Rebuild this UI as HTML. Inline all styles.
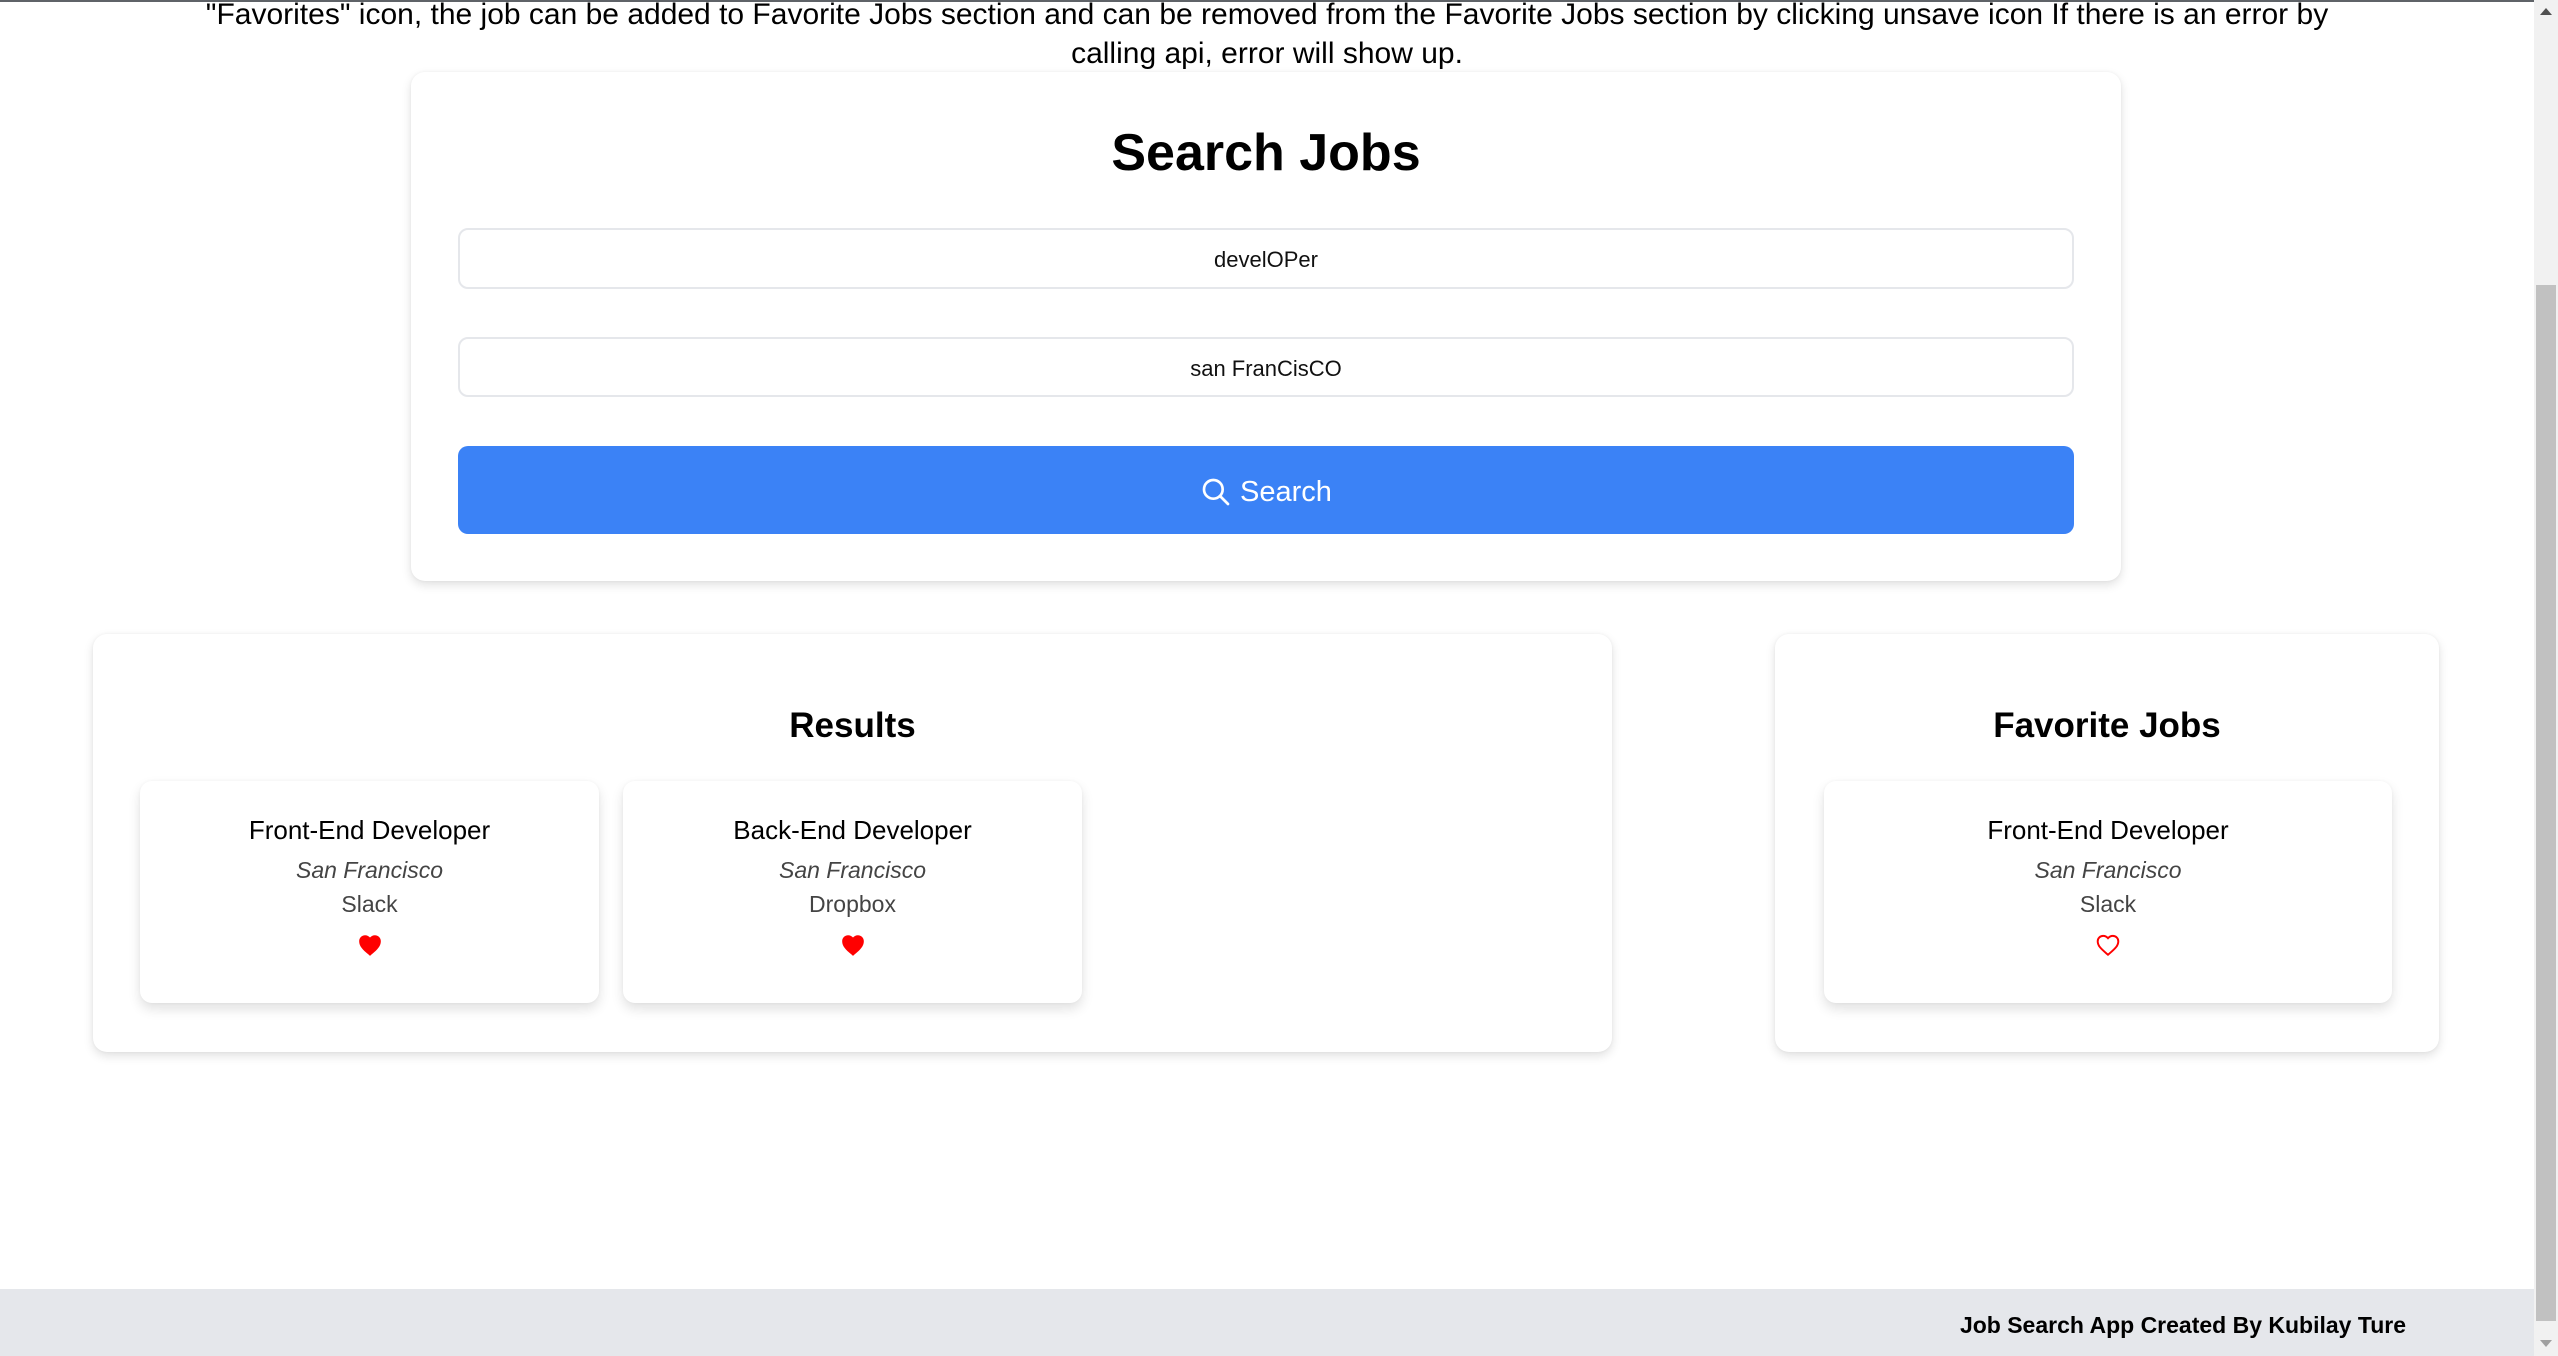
<!DOCTYPE html>
<html><head><meta charset="utf-8"><style>
*{box-sizing:border-box;margin:0;padding:0}
html,body{width:2558px;height:1356px;overflow:hidden;background:#fff;font-family:"Liberation Sans",sans-serif;color:#000}
.abs{position:absolute}
.top{left:0;width:2534px;text-align:center;font-size:30px;line-height:39px;top:-5px;white-space:nowrap}
.card{background:#fff;border-radius:14px;box-shadow:0 4px 10px rgba(0,0,0,.12),0 0 3px rgba(0,0,0,.05)}
.input{left:458px;width:1616px;border:2px solid #e5e7eb;border-radius:10px;text-align:center;font-size:22px;color:#111}
.job{text-align:center;border-radius:12px;background:#fff;box-shadow:0 6px 12px rgba(0,0,0,.12),0 0 3px rgba(0,0,0,.04)}
.job .t{position:absolute;left:0;right:0;top:34px;font-size:26px}
.job .l{position:absolute;left:0;right:0;top:76px;font-size:23px;font-style:italic;color:#444}
.job .c{position:absolute;left:0;right:0;top:110px;font-size:23px;color:#444}
.job svg{position:absolute;left:50%;margin-left:-13px;top:152px}
</style></head><body>
<div class="abs" style="left:0;top:0;width:2534px;height:2px;background:#5f6368"></div>
<div class="abs top">"Favorites" icon, the job can be added to Favorite Jobs section and can be removed from the Favorite Jobs section by clicking unsave icon If there is an error by<br>calling api, error will show up.</div>

<div class="abs card" style="left:411px;top:72px;width:1710px;height:509px"></div>
<div class="abs" style="left:411px;width:1710px;top:123px;text-align:center;font-size:52px;font-weight:bold">Search Jobs</div>
<div class="abs input" style="top:228px;height:61px;line-height:59px">develOPer</div>
<div class="abs input" style="top:337px;height:60px;line-height:59px">san FranCisCO</div>
<div class="abs" style="left:458px;top:446px;width:1616px;height:88px;background:#3b82f6;border-radius:10px;color:#fff;text-align:center;font-size:29px;line-height:92px">
<svg width="32" height="32" viewBox="0 0 24 24" style="vertical-align:-7px;margin-right:8px" fill="none" stroke="#fff" stroke-width="2" stroke-linecap="round"><circle cx="10" cy="10" r="7"/><path d="M15 15l6 6"/></svg>Search</div>

<div class="abs card" style="left:93px;top:634px;width:1519px;height:418px"></div>
<div class="abs" style="left:93px;width:1519px;top:706px;text-align:center;font-size:35px;font-weight:bold">Results</div>
<div class="abs job" style="left:140px;top:781px;width:459px;height:222px"><div class="t">Front-End Developer</div><div class="l">San Francisco</div><div class="c">Slack</div><svg width="26" height="24" viewBox="0 0 24 22"><path d="M12 21l-1.5-1.3C5 15 2 12 2 7.5 2 4.4 4.4 2 7.5 2c1.7 0 3.4.8 4.5 2.1C13.1 2.8 14.8 2 16.5 2 19.6 2 22 4.4 22 7.5c0 4.5-3 7.5-8.5 12.2z" fill="#ff0000"/></svg></div>
<div class="abs job" style="left:623px;top:781px;width:459px;height:222px"><div class="t">Back-End Developer</div><div class="l">San Francisco</div><div class="c">Dropbox</div><svg width="26" height="24" viewBox="0 0 24 22"><path d="M12 21l-1.5-1.3C5 15 2 12 2 7.5 2 4.4 4.4 2 7.5 2c1.7 0 3.4.8 4.5 2.1C13.1 2.8 14.8 2 16.5 2 19.6 2 22 4.4 22 7.5c0 4.5-3 7.5-8.5 12.2z" fill="#ff0000"/></svg></div>

<div class="abs card" style="left:1775px;top:634px;width:664px;height:418px"></div>
<div class="abs" style="left:1775px;width:664px;top:706px;text-align:center;font-size:35px;font-weight:bold">Favorite Jobs</div>
<div class="abs job" style="left:1824px;top:781px;width:568px;height:222px"><div class="t">Front-End Developer</div><div class="l">San Francisco</div><div class="c">Slack</div><svg width="26" height="24" viewBox="0 0 24 22"><path d="M12 20l-1.4-1.2C5.4 14.3 2.5 11.6 2.5 7.6 2.5 4.8 4.7 2.6 7.5 2.6c1.6 0 3.3.8 4.5 2.1 1.2-1.3 2.9-2.1 4.5-2.1 2.8 0 5 2.2 5 5 0 4-2.9 6.7-8.1 11.2z" fill="none" stroke="#ff0000" stroke-width="1.8"/></svg></div>

<div class="abs" style="left:0;top:1289px;width:2534px;height:67px;background:#e5e7eb"></div>
<div class="abs" style="left:1700px;width:706px;top:1312px;text-align:right;font-size:23px;font-weight:bold">Job Search App Created By Kubilay Ture</div>

<div class="abs" style="left:2534px;top:0;width:24px;height:1356px;background:#f1f1f1"></div>
<div class="abs" style="left:2536px;top:285px;width:20px;height:1036px;background:#c1c1c1"></div>
<div class="abs" style="left:2540px;top:8px;width:0;height:0;border-left:6px solid transparent;border-right:6px solid transparent;border-bottom:7px solid #505050"></div>
<div class="abs" style="left:2540px;top:1340px;width:0;height:0;border-left:6px solid transparent;border-right:6px solid transparent;border-top:7px solid #a0a0a0"></div>
</body></html>
